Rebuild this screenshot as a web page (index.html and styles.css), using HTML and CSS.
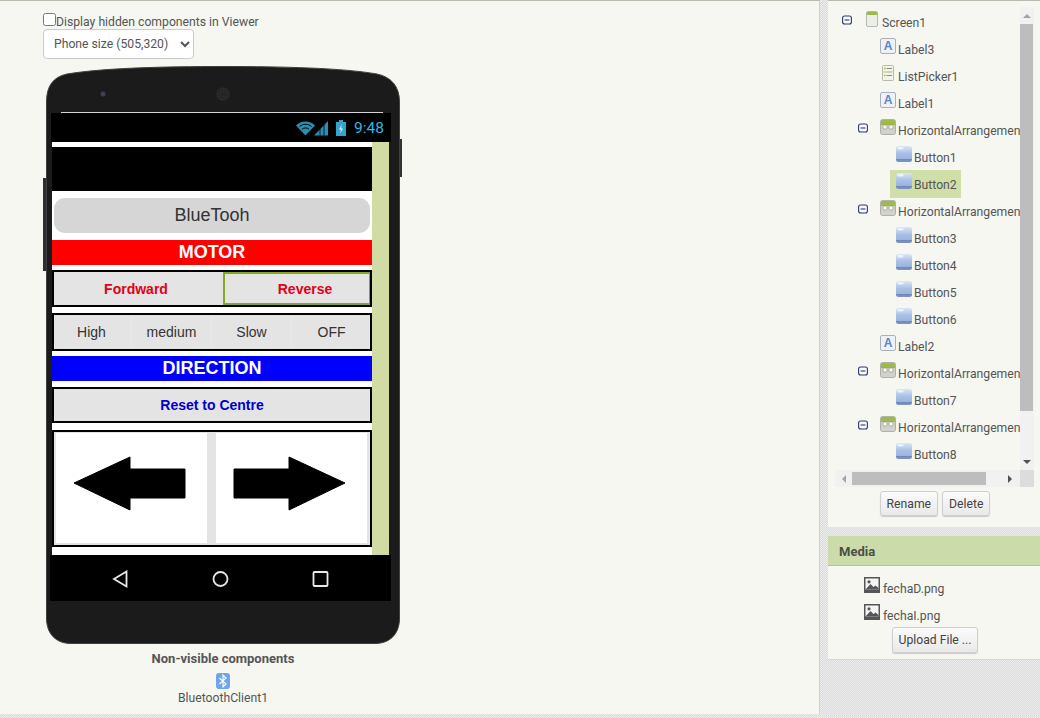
FILE: index.html
```html
<!DOCTYPE html>
<html lang="en">
<head>
<meta charset="utf-8">
<title>Viewer</title>
<link rel="stylesheet" href="styles.css">
</head>
<body>
<svg class="sprite" width="0" height="0" aria-hidden="true">
  <defs>
    <linearGradient id="btnGrad" x1="0" y1="0" x2="0" y2="1">
      <stop offset="0" stop-color="#dbe6f6"/><stop offset="0.45" stop-color="#a9c0e6"/><stop offset="0.8" stop-color="#9ab4df"/><stop offset="0.82" stop-color="#6f88b8"/><stop offset="1" stop-color="#7f96c4"/>
    </linearGradient>
    <symbol id="i-screen" viewBox="0 0 12 16">
      <rect x="0.5" y="0.5" width="11" height="15" rx="1.5" fill="#eceee8" stroke="#b5b8ae"/>
      <path d="M1 4V2a1 1 0 0 1 1-1h8a1 1 0 0 1 1 1v2z" fill="#9dbb45"/>
    </symbol>
    <symbol id="i-label" viewBox="0 0 16 16">
      <rect x="0.5" y="0.5" width="15" height="15" rx="1.5" fill="#eef1f6" stroke="#a9b0bd"/>
      <text x="8" y="12" text-anchor="middle" class="icon-a">A</text>
    </symbol>
    <symbol id="i-list" viewBox="0 0 12 16">
      <rect x="0.5" y="0.5" width="11" height="15" rx="1" fill="#f3f3e8" stroke="#b9b9a8"/>
      <path d="M2 3.5h1.5M2 7h1.5M2 10.5h1.5" stroke="#9dbb45" stroke-width="1.4"/>
      <path d="M4.5 3.5H10M4.5 7H10M4.5 10.5H10" stroke="#8c8c80"/>
      <rect x="1.5" y="6" width="9" height="2" fill="#d8dcc0" opacity=".6"/>
    </symbol>
    <symbol id="i-ha" viewBox="0 0 16 16">
      <rect x="0.5" y="0.5" width="15" height="15" rx="2" fill="#d2d2cc" stroke="#b0b0a8"/>
      <path d="M1 6V2.5A1.5 1.5 0 0 1 2.5 1h11A1.5 1.5 0 0 1 15 2.5V6z" fill="#9dbb45"/>
      <rect x="3" y="6" width="4" height="4" rx="1" fill="#f8f8f4" stroke="#8a8a84" stroke-width=".6"/>
      <rect x="9" y="6" width="4" height="4" rx="1" fill="#f8f8f4" stroke="#8a8a84" stroke-width=".6"/>
    </symbol>
    <symbol id="i-button" viewBox="0 0 16 16">
      <rect x="0" y="0" width="16" height="16" rx="2.5" fill="url(#btnGrad)"/>
      <rect x="1.5" y="1" width="6" height="2.5" rx="1" fill="#f4f7fc" opacity=".8"/>
    </symbol>
    <symbol id="i-toggle" viewBox="0 0 10 10">
      <rect x="0.6" y="1" width="8.8" height="8" rx="2" fill="#fbfbfb" stroke="#2b3578" stroke-width="1.1"/>
      <path d="M2.6 5h4.8" stroke="#2b3578" stroke-width="1.1"/>
    </symbol>
    <symbol id="i-image" viewBox="0 0 16 16">
      <rect width="16" height="16" fill="#555"/>
      <rect x="1.5" y="1.5" width="13" height="11" fill="#f5f5f5"/>
      <circle cx="5" cy="4.8" r="1.6" fill="#555"/>
      <path d="M1.5 12.5 6.5 7l3 3 2-1.5 3 2.5v1.5z" fill="#555"/>
    </symbol>
  </defs>
</svg>

<main class="viewer">
  <label class="hidden-toggle"><input type="checkbox" class="check">Display hidden components in Viewer</label>
  <select class="size-select">
    <option>Phone size (505,320)</option>
  </select>

  <div class="phone">
    <svg class="phone-shell" viewBox="0 0 360 582" width="360" height="582" aria-hidden="true">
      <rect x="355" y="73" width="4" height="38" fill="#333"/>
      <rect x="0" y="112" width="4" height="93" fill="#2e2e2e"/>
      <path d="M3.5 36C3.5 20 10 11 24 8 60 2 120 .5 180 .5S300 2 334 8C348 11 356.5 20 356.5 36V552C356.5 568 347 577.5 332 577.5H28C13 577.5 3.5 568 3.5 552Z" fill="#1b1b1b" stroke="#404040"/>
      <circle cx="60" cy="28" r="2.5" fill="#3b4252"/>
      <circle cx="180" cy="28" r="7" fill="#242424"/>
      <circle cx="180" cy="28" r="5.5" fill="none" stroke="#3a3a3a" stroke-dasharray="1 1"/>
      <circle cx="180" cy="28" r="3" fill="none" stroke="#3a3a3a" stroke-dasharray="1 1"/>
    </svg>
    <div class="top-line"></div>
    <div class="status-bar">
      <svg class="status-icons" width="52" height="16" viewBox="0 0 52 16" aria-hidden="true">
        <path d="M0 5.5C5 0 14 0 19 5.5L9.5 15.5Z" fill="#2b8fb3"/>
        <path d="M3.5 6.5C7 3.5 12 3.5 15.5 6.5M6 9.2C8 7.5 11 7.5 13 9.2" stroke="#000" fill="none"/>
        <path d="M18 15.5 32 1V15.5Z" fill="#2b8fb3"/>
        <path d="M24 8V15.5M28 4V15.5" stroke="#000" stroke-width=".8"/>
        <rect x="40" y="2" width="10" height="14" fill="#35a4cc"/>
        <rect x="43" y="0" width="4" height="2" fill="#35a4cc"/>
        <path d="M45.8 4.5 43 9.5h2l-.8 4 2.8-5h-2z" fill="#d8f2fb"/>
      </svg>
      <span class="clock">9:48</span>
    </div>
    <div class="screen">
      <div class="content">
        <div class="black-block"></div>
        <div class="bt-btn">BlueTooh</div>
        <div class="banner banner-red">MOTOR</div>
        <div class="box motor">
          <div class="motor-btn fwd">Fordward</div>
          <div class="motor-btn rev">Reverse</div>
        </div>
        <div class="box speed">
          <div class="speed-btn">High</div>
          <div class="speed-btn">medium</div>
          <div class="speed-btn">Slow</div>
          <div class="speed-btn">OFF</div>
        </div>
        <div class="banner banner-blue">DIRECTION</div>
        <div class="box reset">Reset to Centre</div>
        <div class="box arrows">
          <div class="arrow-btn">
            <svg width="151" height="110" viewBox="0 0 151 110" aria-hidden="true"><path d="M18 50 74 24V36H129V65H74V77Z" fill="#000" stroke="#000" stroke-linejoin="round"/></svg>
          </div>
          <div class="arrow-btn">
            <svg width="151" height="110" viewBox="0 0 151 110" aria-hidden="true"><path d="M129 50 73 24V36H18V65H73V77Z" fill="#000" stroke="#000" stroke-linejoin="round"/></svg>
          </div>
        </div>
      </div>
      <div class="scroll-green"></div>
    </div>
    <div class="nav-bar">
      <svg width="341" height="46" viewBox="0 0 341 46" aria-hidden="true">
        <path d="M76.5 16.5 64 24l12.5 7.5z" fill="none" stroke="#e8e8e8" stroke-width="1.8"/>
        <circle cx="170.5" cy="24" r="7" fill="none" stroke="#e8e8e8" stroke-width="1.8"/>
        <rect x="263.5" y="17" width="14" height="14" rx="1" fill="none" stroke="#e8e8e8" stroke-width="1.8"/>
      </svg>
    </div>
  </div>

  <div class="nonvisible">
    <div class="nv-title">Non-visible components</div>
    <svg class="nv-icon" width="16" height="16" viewBox="0 0 16 16" aria-hidden="true">
      <rect x="1" y="0" width="14" height="16" rx="3" fill="#6ea6ea"/>
      <path d="M4.5 5 11 11 8 14V2l3 3-6.5 6" fill="none" stroke="#fff" stroke-width="1.1"/>
    </svg>
    <div class="nv-name">BluetoothClient1</div>
  </div>
</main>

<aside class="side">
  <section class="panel tree-panel">
    <div class="tree">
      <div class="tree-list">
        <div class="row r0"><svg class="toggle"><use href="#i-toggle"/></svg><span class="node"><svg class="ico narrow"><use href="#i-screen"/></svg>Screen1</span></div>
        <div class="row r1"><span class="node"><svg class="ico"><use href="#i-label"/></svg>Label3</span></div>
        <div class="row r1"><span class="node"><svg class="ico list"><use href="#i-list"/></svg>ListPicker1</span></div>
        <div class="row r1"><span class="node"><svg class="ico"><use href="#i-label"/></svg>Label1</span></div>
        <div class="row rt"><svg class="toggle"><use href="#i-toggle"/></svg><span class="node"><svg class="ico"><use href="#i-ha"/></svg>HorizontalArrangement1</span></div>
        <div class="row r2"><span class="node"><svg class="ico"><use href="#i-button"/></svg>Button1</span></div>
        <div class="row r2"><span class="node selected"><svg class="ico"><use href="#i-button"/></svg>Button2</span></div>
        <div class="row rt"><svg class="toggle"><use href="#i-toggle"/></svg><span class="node"><svg class="ico"><use href="#i-ha"/></svg>HorizontalArrangement2</span></div>
        <div class="row r2"><span class="node"><svg class="ico"><use href="#i-button"/></svg>Button3</span></div>
        <div class="row r2"><span class="node"><svg class="ico"><use href="#i-button"/></svg>Button4</span></div>
        <div class="row r2"><span class="node"><svg class="ico"><use href="#i-button"/></svg>Button5</span></div>
        <div class="row r2"><span class="node"><svg class="ico"><use href="#i-button"/></svg>Button6</span></div>
        <div class="row r1"><span class="node"><svg class="ico"><use href="#i-label"/></svg>Label2</span></div>
        <div class="row rt"><svg class="toggle"><use href="#i-toggle"/></svg><span class="node"><svg class="ico"><use href="#i-ha"/></svg>HorizontalArrangement3</span></div>
        <div class="row r2"><span class="node"><svg class="ico"><use href="#i-button"/></svg>Button7</span></div>
        <div class="row rt"><svg class="toggle"><use href="#i-toggle"/></svg><span class="node"><svg class="ico"><use href="#i-ha"/></svg>HorizontalArrangement4</span></div>
        <div class="row r2"><span class="node"><svg class="ico"><use href="#i-button"/></svg>Button8</span></div>
      </div>
      <div class="vscroll">
        <div class="arrow-cell"><span class="tri tri-up"></span></div>
        <div class="vthumb"></div>
        <div class="vrest"><span class="tri tri-down"></span></div>
      </div>
      <div class="hscroll">
        <div class="harrow"><span class="tri tri-left"></span></div>
        <div class="hthumb"></div>
        <div class="hrest"><span class="tri tri-right"></span></div>
      </div>
      <div class="corner"></div>
    </div>
    <div class="actions">
      <button class="btn">Rename</button>
      <button class="btn">Delete</button>
    </div>
  </section>

  <section class="panel media-panel">
    <h2 class="media-head">Media</h2>
    <div class="media-row"><svg class="ico"><use href="#i-image"/></svg>fechaD.png</div>
    <div class="media-row"><svg class="ico"><use href="#i-image"/></svg>fechaI.png</div>
    <button class="btn upload">Upload File ...</button>
  </section>
</aside>
</body>
</html>
```

FILE: styles.css
```css
* { box-sizing: border-box; }

html, body { margin: 0; height: 100%; }

body {
  display: flex;
  align-items: flex-start;
  width: 1040px;
  height: 718px;
  overflow: hidden;
  font-family: Roboto, "Liberation Sans", sans-serif;
  font-size: 12.2px;
  color: #555;
  background: repeating-conic-gradient(#dcdcdc 0 25%, #ececec 0 50%) 0 0 / 2px 2px;
}

.sprite { position: absolute; }

.icon-a {
  font-family: "Liberation Sans", sans-serif;
  font-weight: bold;
  font-size: 12px;
  fill: #5b86c4;
}

/* Viewer */
.viewer {
  width: 820px;
  height: 714px;
  flex: none;
  display: flex;
  flex-direction: column;
  align-items: flex-start;
  padding: 12px 0 0 43px;
  background: #f6f7f1;
  border-top: 1px solid #b9bbae;
  border-right: 1px solid #d2d2cc;
}

.hidden-toggle {
  display: flex;
  align-items: flex-start;
  height: 16px;
  line-height: 18px;
  color: #555;
}

.check { width: 13px; height: 13px; margin: 0; }

.size-select {
  width: 151px;
  height: 30px;
  padding: 0 6px;
  font: 12.2px Roboto, sans-serif;
  color: #555;
  background-color: #fff;
  border: 1px solid #ccc;
  border-radius: 4px;
}

.phone {
  position: relative;
  width: 354px;
  height: 578px;
  margin: 7px 0 0 3px;
  padding-top: 46px;
}

.phone-shell { position: absolute; left: -3px; top: 0; }

.top-line, .status-bar, .screen, .nav-bar { position: relative; }

.top-line {
  height: 1px;
  margin: 0 17px 0 15px;
  background: #d4d4d4;
}

.status-bar {
  display: flex;
  align-items: center;
  justify-content: flex-end;
  height: 29px;
  margin: 0 9px 0 5px;
  padding-right: 7px;
  background: #000;
}

.status-icons { margin-right: 6px; }

.clock { font-size: 15.5px; color: #33b5e5; }

.screen {
  display: flex;
  width: 337px;
  height: 413px;
  margin-left: 6px;
}

.content {
  width: 320px;
  padding-top: 5px;
  background: #fff;
  font-family: "Liberation Sans", sans-serif;
}

.scroll-green { width: 17px; background: #d0dca3; }

.black-block { height: 44px; background: #000; }

.bt-btn {
  display: flex;
  align-items: center;
  justify-content: center;
  height: 35px;
  margin: 7px 2px 0;
  border-radius: 11px;
  background: #d6d6d6;
  font-size: 18px;
  color: #333;
}

.banner {
  display: flex;
  align-items: center;
  justify-content: center;
  height: 25px;
  font-size: 18px;
  font-weight: bold;
  color: #fff;
}

.banner-red { margin-top: 7px; background: #f00; }
.banner-blue { margin-top: 5px; background: #00f; }

.box {
  border: 2px solid #000;
  background: #e4e4e4;
}

.motor {
  display: flex;
  height: 37px;
  margin-top: 5px;
  font-size: 14px;
  font-weight: bold;
  color: #e2001a;
}

.motor-btn {
  display: flex;
  align-items: center;
  justify-content: center;
}

.fwd { width: 169px; padding-right: 5px; }

.rev {
  width: 147px;
  padding-left: 16px;
  border: 2px solid #86a820;
  border-right-width: 1px;
}

.speed {
  display: flex;
  height: 38px;
  margin-top: 6px;
  overflow: hidden;
  font-size: 14px;
  color: #333;
}

.speed-btn {
  display: flex;
  align-items: center;
  justify-content: center;
  flex: none;
  width: 80px;
  border-right: 1px solid #e9e9e9;
}

.speed-btn:first-child { margin-left: -2px; }

.reset {
  display: flex;
  align-items: center;
  justify-content: center;
  height: 36px;
  margin-top: 6px;
  font-size: 14px;
  font-weight: bold;
  color: #0000cc;
}

.arrows {
  display: flex;
  gap: 9px;
  height: 117px;
  margin-top: 7px;
  padding: 1px 3px 2px 2px;
}

.arrow-btn { width: 151px; height: 110px; background: #fff; }
.arrow-btn svg { display: block; }

.nav-bar {
  width: 341px;
  height: 46px;
  margin-left: 4px;
  background: #000;
}

.nav-bar svg { display: block; }

.nonvisible {
  display: flex;
  flex-direction: column;
  align-items: center;
  width: 354px;
  margin-left: 3px;
}

.nv-title {
  margin-top: 7px;
  line-height: 15px;
  font-size: 13px;
  font-weight: bold;
  color: #555;
}

.nv-icon { display: block; margin-top: 7px; }

.nv-name { line-height: 18px; margin-top: 0; color: #555; }

/* Side column */
.side {
  width: 212px;
  margin-left: 8px;
  flex: none;
}

.panel { background: #f6f7f1; }

.tree-panel {
  height: 527px;
  padding: 6px 6px 0 7px;
  border-top: 1px solid #b9bbae;
}

.tree {
  display: grid;
  grid-template-columns: 185px 14px;
  grid-template-rows: 463px 17px;
  width: 199px;
  height: 480px;
}

.tree-list { overflow: hidden; padding-top: 1px; }

.row {
  display: flex;
  align-items: flex-start;
  height: 27px;
  white-space: nowrap;
}

.r0 { padding-left: 7px; }
.r1 { padding-left: 39px; }
.r2 { padding-left: 55px; }
.rt { padding-left: 23px; }

.toggle {
  flex: none;
  width: 10px;
  height: 10px;
  margin-top: 7px;
  margin-right: 6px;
}

.r0 .toggle { margin-right: 8px; }

.node {
  display: flex;
  align-items: flex-start;
  height: 27px;
  padding: 0 4px 0 6px;
  line-height: 31px;
}

.ico {
  flex: none;
  width: 16px;
  height: 16px;
  margin-top: 3px;
  margin-right: 2px;
}

.ico.narrow { width: 12px; margin-right: 4px; }

.selected { background: #d0dea8; height: 28px; }

.vscroll {
  display: flex;
  flex-direction: column;
  background: #f1f1f1;
}

.arrow-cell {
  display: flex;
  align-items: center;
  justify-content: center;
  height: 17px;
}

.vthumb { height: 387px; margin-right: 1px; background: #bdbdbd; }

.vrest {
  flex: 1;
  display: flex;
  align-items: flex-end;
  justify-content: center;
  padding-bottom: 6px;
}

.hscroll {
  display: flex;
  align-items: center;
  background: #f1f1f1;
}

.harrow {
  display: flex;
  align-items: center;
  justify-content: center;
  width: 17px;
  height: 100%;
}

.hthumb { width: 134px; height: 13px; background: #bdbdbd; }

.hrest {
  flex: 1;
  display: flex;
  align-items: center;
  justify-content: flex-end;
  padding-right: 8px;
}

.corner { background: #dcdcdc; }

.tri { display: block; width: 0; height: 0; border-style: solid; border-color: transparent; }
.tri-up { border-width: 0 4px 4px; border-bottom-color: #a3a3a3; }
.tri-down { border-width: 4px 4px 0; border-top-color: #505050; }
.tri-left { border-width: 4px 4px 4px 0; border-right-color: #a3a3a3; }
.tri-right { border-width: 4px 0 4px 4px; border-left-color: #505050; }

.actions {
  display: flex;
  justify-content: center;
  gap: 4px;
  margin-top: 4px;
  padding-left: 1px;
}

.btn {
  height: 25px;
  padding: 0 6px;
  font: 12.2px Roboto, sans-serif;
  color: #444;
  background: linear-gradient(#fbfbfb, #e9e9e9);
  border: 1px solid #cfcfcf;
  border-radius: 3px;
  box-shadow: 0 1px 1px rgba(0, 0, 0, .18);
}

.media-panel {
  height: 123px;
  margin-top: 9px;
  box-shadow: 0 1px 0 #d8d8d2;
}

.media-head {
  height: 30px;
  margin: 0 0 8px;
  padding-left: 11px;
  line-height: 31px;
  font-size: 13px;
  font-weight: bold;
  color: #4a4f46;
  background: #cbdcaa;
  border-bottom: 1px solid #b4c199;
}

.media-row {
  display: flex;
  align-items: flex-start;
  height: 27px;
  padding-left: 36px;
  line-height: 31px;
}

.media-row .ico { margin-right: 3px; }

.upload {
  display: block;
  width: 86px;
  height: 26px;
  margin: -1px 0 0 64px;
  padding: 0;
}
```
